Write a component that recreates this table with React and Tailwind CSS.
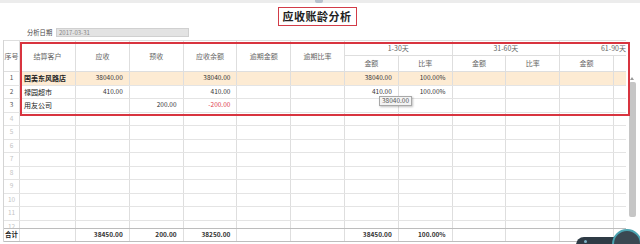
import React from "react";

const W = "w-[53.8px]";
const cols = [
  { k: "cust", w: "w-[56px]", align: "left" },
  { k: "ys", w: W },
  { k: "yus", w: W },
  { k: "bal", w: W },
  { k: "ovd", w: W },
  { k: "ovr", w: W },
  { k: "g1a", w: W },
  { k: "g1r", w: W },
  { k: "g2a", w: W },
  { k: "g2r", w: W },
  { k: "g3a", w: W },
  { k: "g3r", w: W },
];

const rows = [
  { n: 1, hl: true, cust: "国美东风路店", ys: "38040.00", bal: "38040.00", g1a: "38040.00", g1r: "100.00%" },
  { n: 2, cust: "禄园超市", ys: "410.00", bal: "410.00", g1a: "410.00", g1r: "100.00%" },
  { n: 3, cust: "用友公司", yus: "200.00", bal: "-200.00", neg: true },
];
for (let i = 4; i <= 12; i++) rows.push({ n: i, empty: true });

const total = { ys: "38450.00", yus: "200.00", bal: "38250.00", g1a: "38450.00", g1r: "100.00%" };

const font = { fontFamily: '"Noto Sans CJK SC", "Liberation Sans", sans-serif' };

function HeadCell({ w, children }) {
  return (
    <div className={`${w} shrink-0 h-full flex items-center justify-center border-r border-[#dedede] text-[7px] text-[#666]`}>
      {children}
    </div>
  );
}

function Group({ label }) {
  return (
    <div className="w-[107.6px] shrink-0 h-full flex flex-col">
      <div className="h-[16px] flex items-center justify-center border-b border-r border-[#dedede] text-[7px] text-[#666]">{label}</div>
      <div className="flex h-[16px]">
        <div className="w-[53.8px] flex items-center justify-center border-r border-[#dedede] text-[7px] text-[#666]">金额</div>
        <div className="w-[53.8px] flex items-center justify-center border-r border-[#dedede] text-[7px] text-[#666]">比率</div>
      </div>
    </div>
  );
}

export default function App() {
  return (
    <div className="relative w-[640px] h-[244px] overflow-hidden bg-white" style={font}>
      {/* top strip */}
      <div className="h-[3px] bg-[#ececec] flex justify-center">
        <div className="ml-[-2px] w-[8px] h-[3px] bg-[#b8c0cc] rounded-b-[2px]" />
      </div>

      {/* title */}
      <div className="flex justify-center pr-[6px] mt-[4px]">
        <div className="h-[19px] px-[4px] border-[1.5px] border-[#d23c48] flex items-center text-[11px] font-bold text-[#222] tracking-[0.5px]">
          应收账龄分析
        </div>
      </div>

      {/* date row */}
      <div className="flex items-center mt-[2px] h-[9px] pl-[27px]">
        <span className="text-[6.3px] text-[#444] w-[29px]">分析日期</span>
        <div className="w-[133px] h-[9px] bg-[#e3e3e3] border border-[#d0d0d0] flex items-center pl-[2px] text-[6px] text-[#888]">
          2017-03-31
        </div>
      </div>

      {/* table */}
      <div className="flex mt-[3px] ml-[3px]">
        <div className="w-[623px] shrink-0 overflow-hidden border-l border-[#d4d4d4]">
          <div className="w-[700px]">
            {/* header */}
            <div className="flex h-[32px] border-t border-b border-[#dedede]">
              <HeadCell w="w-[16px]">序号</HeadCell>
              <HeadCell w="w-[56px]">结算客户</HeadCell>
              <HeadCell w={W}>应收</HeadCell>
              <HeadCell w={W}>预收</HeadCell>
              <HeadCell w={W}>应收余额</HeadCell>
              <HeadCell w={W}>逾期金额</HeadCell>
              <HeadCell w={W}>逾期比率</HeadCell>
              <Group label="1-30天" />
              <Group label="31-60天" />
              <Group label="61-90天" />
            </div>
            {/* body */}
            <div className="h-[156px] overflow-hidden">
              {rows.map((r) => (
                <div key={r.n} className="flex h-[13.5px] border-b border-[#e4e4e4]">
                  <div className={`w-[16px] shrink-0 flex items-center justify-center border-r border-[#dedede] text-[6.5px] ${r.empty ? "text-[#c4c4c4]" : "text-[#555]"}`}>
                    {r.n}
                  </div>
                  {cols.map((c) => {
                    const v = r[c.k] || "";
                    const left = c.align === "left";
                    return (
                      <div
                        key={c.k}
                        className={`${c.w} shrink-0 flex items-center border-r border-[#dedede] ${r.hl ? "bg-[#fdebd3]" : ""} ${left ? "justify-start pl-[4px] text-[7px] text-[#222]" : "justify-end pr-[6px] text-[6.5px]"} ${!left && r.neg && c.k === "bal" ? "text-[#e0404e]" : !left ? "text-[#333]" : ""} ${left && r.hl ? "font-semibold" : ""}`}
                      >
                        {v}
                      </div>
                    );
                  })}
                </div>
              ))}
            </div>
            {/* total */}
            <div className="flex h-[14px] border-t border-b border-[#bdbdbd]">
              <div className="w-[16px] shrink-0 flex items-center pl-[1px] border-r border-[#dedede] text-[6.5px] font-bold text-[#222]">合计</div>
              {cols.map((c) => (
                <div key={c.k} className={`${c.w} shrink-0 flex items-center justify-end pr-[6px] border-r border-[#dedede] text-[6.5px] font-bold text-[#333]`}>
                  {total[c.k] || ""}
                </div>
              ))}
            </div>
          </div>
        </div>
        {/* scrollbar */}
        <div className="w-[14px] shrink-0 flex flex-col items-start pl-[3px]">
          <div className="mt-[37px] ml-[1px] w-0 h-0 border-l-[2px] border-r-[2px] border-b-[3px] border-l-transparent border-r-transparent border-b-[#999]" />
          <div className="mt-[2px] w-[7px] h-[135px] bg-[#c6c6c6] rounded-[2px]" />
        </div>
      </div>

      {/* red annotation box */}
      <div className="absolute left-[20px] top-[42px] w-[610px] h-[74px] border-2 border-[#d8343f] pointer-events-none" />

      {/* tooltip */}
      <div className="absolute left-[379px] top-[96px] h-[10px] px-[2px] flex items-center bg-[#f3f3f3] border border-[#a8a8a8] shadow-[1px_1px_2px_rgba(0,0,0,0.25)] text-[6.5px] text-[#555]">
        38040.00
      </div>

      {/* bottom-right widget */}
      <div className="absolute left-[576px] top-[237px] w-[70px] h-[16px] rounded-full bg-[#2e3b45] flex items-start pl-[8px] pt-[3px]">
        <span className="w-[3px] h-[3px] rounded-full bg-[#7fb3c7]" />
      </div>
      <div className="absolute left-[612px] top-[229px] w-[30px] h-[30px] rounded-full bg-[#3a4852] border-2 border-[#4aa3b0]" />
    </div>
  );
}
